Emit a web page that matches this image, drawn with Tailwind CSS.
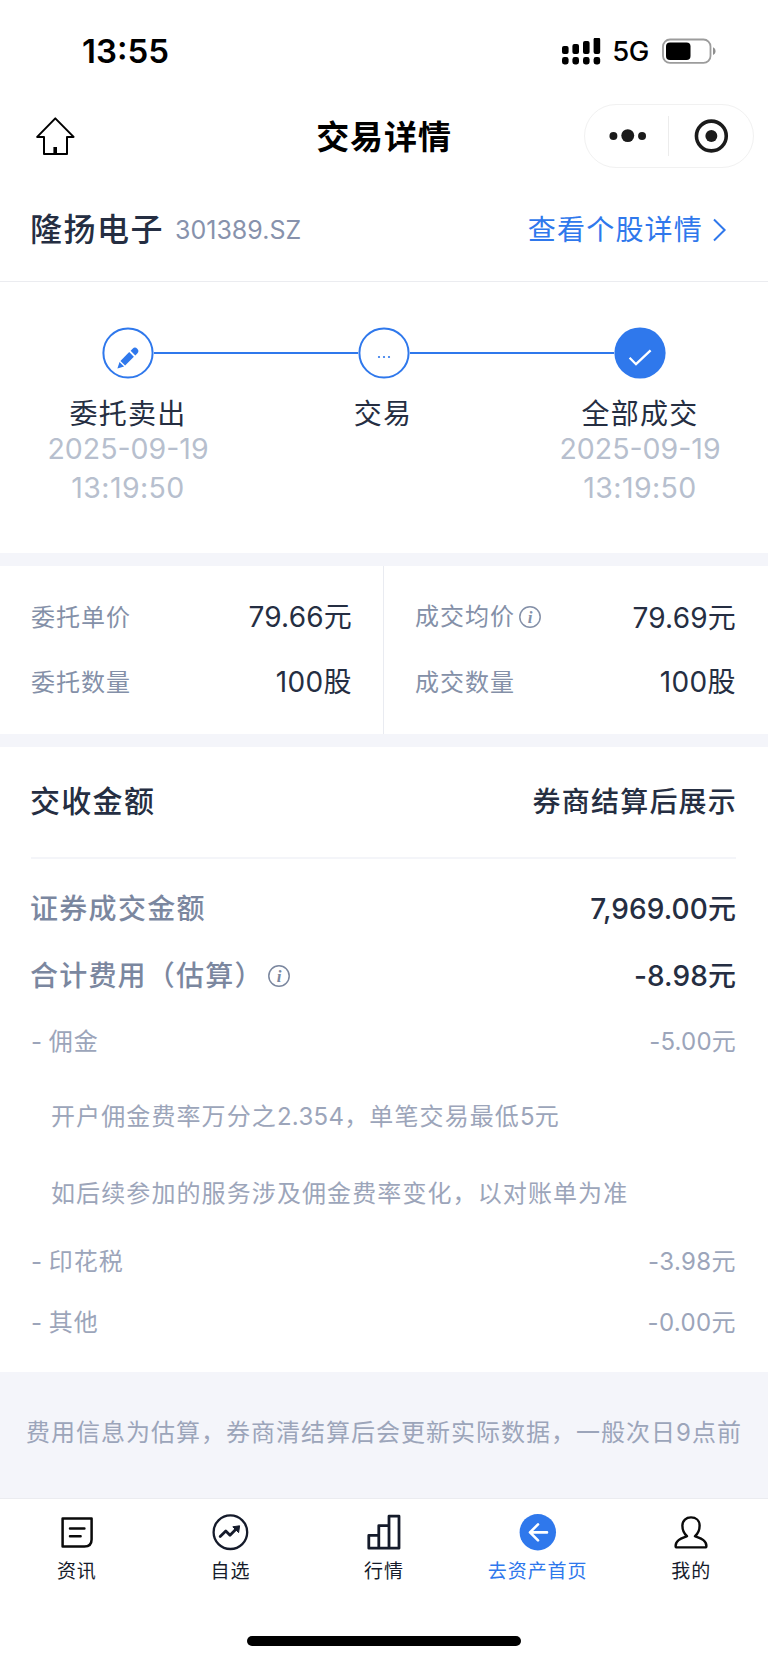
<!DOCTYPE html>
<html lang="zh-CN">
<head>
<meta charset="utf-8">
<meta name="viewport" content="width=device-width, initial-scale=1">
<title>交易详情</title>
<script src="https://cdn.jsdelivr.net/npm/@tailwindcss/browser@4"></script>
</head>
<body class="bg-white font-['Inter','Noto_Sans_CJK_SC',sans-serif] text-[#252e42]">
<div class="flex h-[1663px] w-[768px] flex-col overflow-hidden whitespace-nowrap">

  <!-- Status bar -->
  <div class="flex h-[104px] shrink-0 items-center justify-between pl-[82px] pr-[51px] text-black">
    <div class="pb-px text-[33px] font-semibold leading-none">13:55</div>
    <div class="flex items-center">
      <svg class="h-[28px] w-[39px]" viewBox="0 0 39 28" fill="currentColor">
        <rect x="0" y="8" width="6.6" height="8" rx="2"/><rect x="10.4" y="6" width="6.6" height="10" rx="2"/><rect x="21" y="3" width="6.6" height="13" rx="2"/><rect x="31.6" y="-.4" width="6.6" height="16.4" rx="2"/>
        <rect x="0" y="19" width="6.6" height="7.4" rx="2.4"/><rect x="10.4" y="19" width="6.6" height="7.4" rx="2.4"/><rect x="21" y="19" width="6.6" height="7.4" rx="2.4"/><rect x="31.6" y="19" width="6.6" height="7.4" rx="2.4"/>
      </svg>
      <div class="ml-[11px] text-[27.5px] font-medium leading-none tracking-[-0.4px]">5G</div>
      <svg class="ml-[13px] h-[28px] w-[55px]" viewBox="0 0 55 28">
        <rect x="1" y="1.5" width="47.5" height="23.4" rx="7" fill="none" stroke="#9c9c9c" stroke-width="1.8"/>
        <rect x="4" y="4.5" width="24.5" height="17.6" rx="4" fill="#000"/>
        <path d="M51 9.2c3.4 1.4 3.4 6.4 0 7.8z" fill="#8f8f8f"/>
      </svg>
    </div>
  </div>

  <!-- Navigation bar -->
  <div class="grid h-[64px] shrink-0 grid-cols-3 items-center pl-[36px] pr-[14px] text-black">
    <svg class="h-[40px] w-[40px]" viewBox="0 0 40 40" fill="none" stroke="#000" stroke-width="2" stroke-linejoin="round">
      <path d="M19.3 2.4 37.6 20.9H31V38H8V20.9H1.2Z"/><path d="M19.2 31V37.4" stroke-width="3.6"/>
    </svg>
    <div class="-ml-[44px] pl-[22px] pt-[3px] text-center text-[33px] font-bold leading-none tracking-[0.9px]">交易详情</div>
    <div class="flex h-[64px] w-[170px] items-center justify-self-end rounded-full border border-[#f1f1f1]">
      <svg class="h-[20px] w-[84px]" viewBox="0 0 84 20" fill="#1b1b1b"><circle cx="28.6" cy="10" r="4"/><circle cx="43" cy="9.6" r="6.5"/><circle cx="57.4" cy="10" r="4"/></svg>
      <div class="h-[40px] w-px bg-[#ececec]"></div>
      <svg class="h-[36px] w-[84px]" viewBox="0 0 84 36"><circle cx="42.6" cy="18" r="15" fill="none" stroke="#1b1b1b" stroke-width="3.6"/><circle cx="42.6" cy="18" r="6" fill="#1b1b1b"/></svg>
    </div>
  </div>

  <!-- Stock heading -->
  <div class="flex h-[114px] shrink-0 items-center border-b border-[#ebecf0] px-[30px] pt-[11px]">
    <div class="text-[32px] font-medium leading-none tracking-[1.5px]">隆扬电子</div>
    <div class="ml-[11px] text-[25px] leading-none text-[#8792ac]">301389.SZ</div>
    <div class="ml-auto flex items-center text-[28px] leading-none text-[#2f78ec]">
      <span class="tracking-[1.2px]">查看个股详情</span>
      <svg class="ml-[9px] mr-[11px] h-[24px] w-[15px]" viewBox="0 0 15 24" fill="none" stroke="currentColor" stroke-width="2"><path d="M2 1.5 12.6 12 2 22.5"/></svg>
    </div>
  </div>

  <!-- Order progress -->
  <div class="h-[271px] shrink-0 pt-[45px]">
    <div class="flex items-center px-[102px]">
      <svg class="h-[52px] w-[52px]" viewBox="0 0 52 52">
        <circle cx="26" cy="26" r="24.6" fill="none" stroke="#2f78ec" stroke-width="2"/>
        <g fill="#2f78ec" transform="translate(15.4 41.6) rotate(-45)"><path d="M0 0 6.2-3.2V3.2Z"/><rect x="7.6" y="-3.3" width="12.4" height="6.6"/><path d="M22-3.3h2.8a3.3 3.3 0 0 1 0 6.6h-2.8z"/></g>
      </svg>
      <div class="h-[2px] flex-1 bg-[#2f78ec]"></div>
      <svg class="h-[52px] w-[52px]" viewBox="0 0 52 52">
        <circle cx="26" cy="26" r="24.6" fill="none" stroke="#2f78ec" stroke-width="2"/>
        <g fill="#2f78ec"><circle cx="21" cy="30" r="1.1"/><circle cx="26" cy="30" r="1.1"/><circle cx="31" cy="30" r="1.1"/></g>
      </svg>
      <div class="h-[2px] flex-1 bg-[#2f78ec]"></div>
      <svg class="h-[52px] w-[52px]" viewBox="0 0 52 52">
        <circle cx="26" cy="26" r="25.6" fill="#2f78ec"/><path d="M15.6 30.8 22 37.2 36.6 23.4" fill="none" stroke="#fff" stroke-width="2.3"/>
      </svg>
    </div>
    <div class="grid grid-cols-3 pt-[17px] text-center text-[28px]">
      <div><div class="leading-[36px] tracking-[1.3px]">委托卖出</div><div class="-mt-[3px] text-[28.5px] leading-[39px] text-[#b7bfce]">2025-09-19<br><span class="tracking-[0.4px]">13:19:50</span></div></div>
      <div><div class="leading-[36px] tracking-[1.3px] -ml-[2px]">交易</div></div>
      <div><div class="leading-[36px] tracking-[1.3px]">全部成交</div><div class="-mt-[3px] text-[28.5px] leading-[39px] text-[#b7bfce]">2025-09-19<br><span class="tracking-[0.4px]">13:19:50</span></div></div>
    </div>
  </div>

  <!-- Price and quantity -->
  <div class="grid h-[194px] shrink-0 grid-cols-2 border-y-[13px] border-[#f4f5fa] text-[28px]">
    <div class="border-r border-[#e9ebf1] pl-[31px] pr-[31px] pt-[18px]">
      <div class="flex h-[65px] items-center justify-between"><span class="pt-[2px] text-[24px] tracking-[1px] text-[#8490a8]">委托单价</span><span class="tracking-[0.2px]">79.66元</span></div>
      <div class="flex h-[65px] items-center justify-between"><span class="pt-[2px] text-[24px] tracking-[1px] text-[#8490a8]">委托数量</span><span class="tracking-[0.4px]">100股</span></div>
    </div>
    <div class="pl-[31px] pr-[32px] pt-[18px]">
      <div class="flex h-[65px] items-center justify-between pt-px">
        <span class="flex items-center text-[24px] tracking-[1px] text-[#8490a8]">成交均价
          <svg class="ml-[3px] h-[24px] w-[24px]" viewBox="0 0 24 24"><circle cx="12" cy="12" r="10.2" fill="none" stroke="currentColor" stroke-width="1.5"/><text x="12" y="17.6" text-anchor="middle" class="font-['Liberation_Serif',serif] text-[17px] font-bold italic tracking-normal" fill="currentColor">i</text></svg>
        </span>
        <span class="pt-px tracking-[0.2px]">79.69元</span>
      </div>
      <div class="flex h-[65px] items-center justify-between"><span class="pt-[2px] text-[24px] tracking-[1px] text-[#8490a8]">成交数量</span><span class="tracking-[0.4px]">100股</span></div>
    </div>
  </div>

  <!-- Settlement -->
  <div class="h-[625px] shrink-0 pl-[31px] pr-[32px]">
    <div class="flex h-[112px] items-center justify-between border-b-2 border-[#f4f5f9] font-medium"><span class="-ml-px pb-[2px] text-[30px] tracking-[1.3px]">交收金额</span><span class="text-[28px] tracking-[1.2px] -mr-px">券商结算后展示</span></div>
    <div class="mt-[16px] flex h-[67px] items-center justify-between text-[28px] font-medium"><span class="-ml-px tracking-[1.3px] text-[#7b879f]">证券成交金额</span><span class="tracking-[0.1px]">7,969.00元</span></div>
    <div class="flex h-[68px] items-center justify-between text-[28px] font-medium">
      <span class="-ml-px flex items-center tracking-[1.2px] text-[#7b879f]">合计费用（估算）
        <svg class="ml-[3px] h-[24px] w-[24px]" viewBox="0 0 24 24"><circle cx="12" cy="12" r="10.2" fill="none" stroke="currentColor" stroke-width="1.5"/><text x="12" y="17.6" text-anchor="middle" class="font-['Liberation_Serif',serif] text-[17px] font-bold italic tracking-normal" fill="currentColor">i</text></svg>
      </span>
      <span class="tracking-[0.1px]">-8.98元</span>
    </div>
    <div class="text-[24px] text-[#9ca5ba]">
      <div class="flex h-[64px] items-center justify-between"><span class="tracking-[1px] [word-spacing:-2px]">- 佣金</span><span class="tracking-[0.2px]">-5.00元</span></div>
      <div class="flex h-[85px] items-center pl-[20px] tracking-[1.1px]">开户佣金费率万分之<span class="tracking-[0.3px]">2.354</span>，单笔交易最低<span class="tracking-[0.3px]">5</span>元</div>
      <div class="flex h-[69px] items-center pl-[20px] tracking-[1.1px]">如后续参加的服务涉及佣金费率变化，以对账单为准</div>
      <div class="flex h-[68px] items-center justify-between"><span class="tracking-[1px] [word-spacing:-2px]">- 印花税</span><span class="tracking-[0.4px]">-3.98元</span></div>
      <div class="flex h-[53px] items-center justify-between"><span class="tracking-[1px] [word-spacing:-2px]">- 其他</span><span class="tracking-[0.4px]">-0.00元</span></div>
    </div>
  </div>

  <!-- Fee notice -->
  <div class="flex h-[126px] shrink-0 items-center bg-[#f4f5fa] pb-[5px] pl-[26px] text-[24px] tracking-[1px] text-[#9ca5ba]">费用信息为估算，券商清结算后会更新实际数据，一般次日9点前</div>

  <!-- Tab bar -->
  <div class="grid h-[138px] shrink-0 grid-cols-5 border-t border-[#ebecf0] pt-[15px] text-center text-[19px] leading-[28px] tracking-[0.9px] text-[#151b2b]">
    <div class="flex flex-col items-center">
      <svg class="h-[40px] w-[40px]" viewBox="0 0 40 40" fill="none" stroke="#0a0a0a" stroke-width="2.5" stroke-linejoin="round" stroke-linecap="round"><path d="M5.6 4.6H34.6V25.4Q34.6 32.4 27.4 32.4H5.6Z"/><path d="M13 14.4H27.4M13 22.2H23.6"/></svg>
      <div class="mt-[4px]">资讯</div>
    </div>
    <div class="flex flex-col items-center">
      <svg class="h-[40px] w-[40px]" viewBox="0 0 40 40" fill="none" stroke="#151b2b"><circle cx="20.4" cy="18.2" r="16.8" stroke-width="2.3"/><path d="M10.2 22.6 15.8 17 20 21.2 26.4 14.8" stroke-width="2.8" stroke-linejoin="round" stroke-linecap="round"/><path d="M22.8 12.8 29.6 11.8 28.6 18.6Z" fill="#151b2b" stroke-width="1"/></svg>
      <div class="mt-[4px]">自选</div>
    </div>
    <div class="flex flex-col items-center">
      <svg class="h-[40px] w-[40px]" viewBox="0 0 40 40" fill="none" stroke="#151b2b" stroke-width="2.8" stroke-linejoin="round"><path d="M4.8 21.4H14.8V34.2H4.8ZM14.8 11.6H25V34.2H14.8ZM25 2.2H35V34.2H25Z"/></svg>
      <div class="mt-[4px]">行情</div>
    </div>
    <div class="flex flex-col items-center text-[#2f78ec]">
      <svg class="h-[40px] w-[40px]" viewBox="0 0 40 40"><circle cx="19.8" cy="18.2" r="18.2" fill="#2f78ec"/><path d="M29 18.4H12M20 10.4 12 18.4 20 26.4" fill="none" stroke="#fff" stroke-width="2.6" stroke-linecap="round" stroke-linejoin="round"/></svg>
      <div class="mt-[4px]">去资产首页</div>
    </div>
    <div class="flex flex-col items-center">
      <svg class="h-[40px] w-[40px]" viewBox="0 0 40 40" fill="none" stroke="#0a0a0a" stroke-width="2.4" stroke-linejoin="round"><path d="M16 22.2C12.8 19.4 11.4 15.6 11.4 11.8C11.4 6.4 15.2 3.4 20 3.4S28.6 6.4 28.6 11.8C28.6 15.6 27.2 19.4 24 22.2C28 24 35.4 25.4 35.4 32Q35.4 33.4 34 33.4H6Q4.6 33.4 4.6 32C4.6 25.4 12 24 16 22.2Z"/></svg>
      <div class="mt-[4px]">我的</div>
    </div>
  </div>
  <div class="mx-auto h-[10px] w-[274px] shrink-0 rounded-full bg-black"></div>
</div>
</body>
</html>
